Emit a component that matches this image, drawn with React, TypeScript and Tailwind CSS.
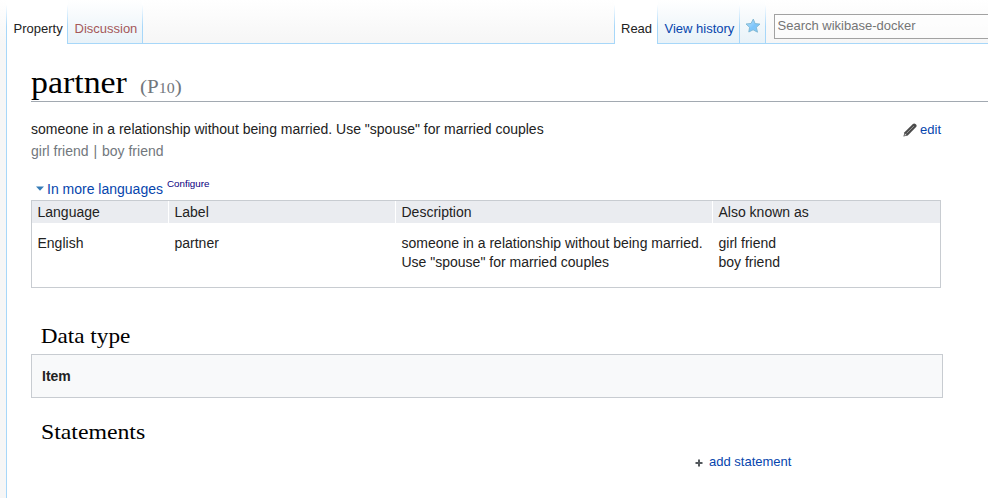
import type { ReactNode } from "react";

const serif = "font-['Georgia','Liberation_Serif',serif]";

function Divider() {
  return <div className="w-px shrink-0 bg-linear-to-b from-white from-10% to-[#a7d7f9] to-60%" />;
}

function Tab({ children, active = false, className }: { children: ReactNode; active?: boolean; className: string }) {
  const look = active ? "bg-white" : "border-b border-[#a7d7f9] bg-linear-to-b from-white to-[#e8f2f8]";
  return <div className={`shrink-0 text-[13px] leading-[15px] ${look} ${className}`}>{children}</div>;
}

function StarIcon() {
  return (
    <svg width="16" height="16" viewBox="0 0 16 16" aria-hidden="true">
      <defs>
        <linearGradient id="star" x1="0" y1="0" x2="1" y2="1">
          <stop offset="0" stopColor="#c5e6fb" />
          <stop offset=".55" stopColor="#7cc5fb" />
          <stop offset="1" stopColor="#86c7f5" />
        </linearGradient>
      </defs>
      <path
        d="M8.3 1.1 10.1 5.6 15 6.1 11.4 9.3 12.5 14.2 8.1 11.8 3.8 14 4.6 9.3 1 6 6 5.5Z"
        fill="url(#star)"
        stroke="#7cb5d1"
        strokeWidth=".9"
        strokeLinejoin="round"
      />
    </svg>
  );
}

function PencilIcon() {
  return (
    <svg width="14" height="14" viewBox="0 0 14 14" aria-hidden="true">
      <path d="M.4 13.6 1.5 9.2 9.9.9Q11.3-.2 12.8 1.2 14.3 2.7 13.1 4.1L4.8 12.4Z" fill="#4b4b4b" />
      <path d="M3.6 10.3 10.9 3.1" stroke="#999" strokeWidth="1" />
      <path d="m1.3 12.7.7-2.2 1.5 1.5Z" fill="#ddd" />
    </svg>
  );
}

function Header() {
  return (
    <header className="flex h-11 shrink-0">
      <Divider />
      <Tab active className="w-[60px] pt-[21px] pl-[6.5px] text-[#222]">Property</Tab>
      <Divider />
      <Tab className="w-[74px] pt-[21px] pl-[6.5px] text-[#a55858]">Discussion</Tab>
      <Divider />
      <div className="flex-1 border-b border-[#a7d7f9] bg-linear-to-b from-white to-[#f6f6f6]" />
      <Divider />
      <Tab active className="w-[42px] pt-[21px] pl-1.5 text-[#222]">Read</Tab>
      <Divider />
      <Tab className="w-[81px] pt-[21px] pl-[6.5px] text-[#0645ad]">View history</Tab>
      <Divider />
      <Tab className="w-[25px] pt-[18px] pl-[5px]"><StarIcon /></Tab>
      <Divider />
      <div className="w-[222px] shrink-0 border-b border-[#a7d7f9] bg-linear-to-b from-white to-[#f6f6f6] pt-3.5 pl-2">
        <div className="h-[25px] border border-r-0 border-[#a2a2a2] bg-white/50 pt-[3px] pl-[2.5px] text-[13px] leading-[15px] text-[#757575]">
          Search wikibase-docker
        </div>
      </div>
    </header>
  );
}

function HeadCell({ children }: { children: ReactNode }) {
  return (
    <div className="border-l border-white bg-[#eaecf0] pl-[5.5px] leading-[22px] first:border-l-0">{children}</div>
  );
}

const columns = "grid grid-cols-[136px_227px_317px_228px]";

export default function App() {
  return (
    <div className="flex h-[498px] w-[988px] overflow-hidden bg-white font-['Liberation_Sans',Arial,sans-serif] text-sm text-[#222]">
      <div className="w-1.5 shrink-0 bg-[#f6f6f6]">
        <div className="h-11 bg-linear-to-b from-white to-[#f6f6f6]" />
      </div>
      <div className="flex min-w-0 flex-1 flex-col">
        <Header />
        <main className="flex-1 border-l border-[#a7d7f9] pl-6">
          <h1 className={`flex h-[58px] items-baseline border-b border-[#a2a9b1] pt-[21px] text-[30.5px] leading-9 text-black ${serif}`}>
            <span className="w-[109px] origin-left scale-x-[1.11]">partner</span>
            <span className="origin-left scale-x-[1.14] text-[18.5px] text-[#72777d]">
              (P<span className="text-[14px]">10</span>)
            </span>
          </h1>
          <div className="flex w-[910px] justify-between pt-4 leading-[22px]">
            <div>
              <p>someone in a relationship without being married. Use "spouse" for married couples</p>
              <p className="text-[#72777d]">girl friend<span className="px-px"> | </span>boy friend</p>
            </div>
            <div className="mt-px flex h-[22px] items-center gap-[3px] text-[13px] text-[#0645ad]">
              <PencilIcon />
              <span>edit</span>
            </div>
          </div>
          <div className="flex h-[38px] pt-4 pl-[4.5px] leading-[22px] text-[#0645ad]">
            <svg className="mt-2 mr-[3.5px] h-[5px] w-2" viewBox="0 0 8 5" aria-hidden="true">
              <path d="M0 .5h8L4 4.7Z" fill="#347bb6" />
            </svg>
            <span>In more languages</span>
            <span className="-mt-[5px] ml-1 text-[9.8px] text-[#0b0080]">Configure</span>
          </div>
          <section className="h-[88px] w-[910px] border border-[#c8ccd1]">
            <div className={columns}>
              <HeadCell>Language</HeadCell>
              <HeadCell>Label</HeadCell>
              <HeadCell>Description</HeadCell>
              <HeadCell>Also known as</HeadCell>
            </div>
            <div className={`${columns} pt-[11px] leading-[19px]`}>
              <div className="pl-[5.5px]">English</div>
              <div className="pl-[6.5px]">partner</div>
              <div className="pl-[6.5px]">someone in a relationship without being married.<br />Use "spouse" for married couples</div>
              <div className="pl-[6.5px]">girl friend<br />boy friend</div>
            </div>
          </section>
          <h2 className={`h-[66px] origin-left scale-x-[1.08] pt-[34px] pl-[9px] text-[21.5px] leading-7 text-black ${serif}`}>Data type</h2>
          <div className="h-11 w-[912px] border border-[#c8ccd1] bg-[#f8f9fa] pt-2.5 pl-2.5 font-bold leading-[22px]">Item</div>
          <h2 className={`h-[52px] origin-left scale-x-[1.105] pt-5 pl-[9px] text-[21.5px] leading-7 text-black ${serif}`}>Statements</h2>
          <div className="flex items-center gap-1.5 pl-[664px] text-[13px] leading-6 text-[#0645ad]">
            <svg className="mt-0.5" width="8" height="8" viewBox="0 0 8 8" aria-hidden="true">
              <path d="M4 .5v7M.5 4h7" stroke="#54595d" strokeWidth="2" />
            </svg>
            <span>add statement</span>
          </div>
        </main>
      </div>
    </div>
  );
}
